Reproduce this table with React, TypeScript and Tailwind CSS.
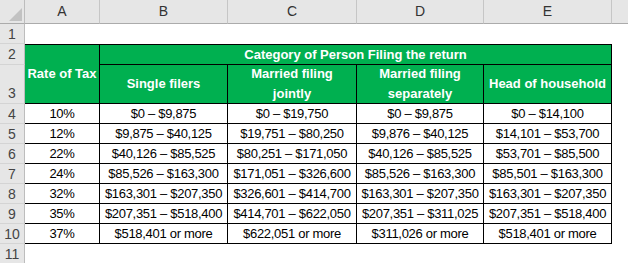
import React from 'react';

const font = { fontFamily: '"Liberation Sans", Arial, sans-serif' };

const columns = ['A', 'B', 'C', 'D', 'E'];

const rows: string[][] = [
  ['10%', '$0 – $9,875', '$0 – $19,750', '$0 – $9,875', '$0 – $14,100'],
  ['12%', '$9,875 – $40,125', '$19,751 – $80,250', '$9,876 – $40,125', '$14,101 – $53,700'],
  ['22%', '$40,126 – $85,525', '$80,251 – $171,050', '$40,126 – $85,525', '$53,701 – $85,500'],
  ['24%', '$85,526 – $163,300', '$171,051 – $326,600', '$85,526 – $163,300', '$85,501 – $163,300'],
  ['32%', '$163,301 – $207,350', '$326,601 – $414,700', '$163,301 – $207,350', '$163,301 – $207,350'],
  ['35%', '$207,351 – $518,400', '$414,701 – $622,050', '$207,351 – $311,025', '$207,351 – $518,400'],
  ['37%', '$518,401 or more', '$622,051 or more', '$311,026 or more', '$518,401 or more'],
];

const filers = [
  ['Single filers'],
  ['Married filing', 'jointly'],
  ['Married filing', 'separately'],
  ['Head of household'],
];

function RowNum({ n, align = 'center' }: { n: number; align?: 'center' | 'end' }) {
  return (
    <div
      className={`flex justify-center bg-[#e6e6e6] border-r border-b border-r-[#bdbdbd] border-b-[#d4d4d4] text-[14px] text-[#444] leading-[20px] ${
        align === 'end' ? 'items-end' : 'items-center'
      }`}
    >
      {n}
    </div>
  );
}

export default function App() {
  return (
    <div
      className="w-[628px] h-[263px] overflow-hidden bg-white grid text-black"
      style={{
        ...font,
        gridTemplateColumns: '25px 75px 128px 129px 127px 128px 1fr',
        gridTemplateRows: '24px 20px 21px 39px repeat(7, 20px) 1fr',
      }}
    >
      {/* column headers */}
      <div className="relative bg-[#e6e6e6] border-r border-b border-r-[#bdbdbd] border-b-[#ababab]">
        <svg className="absolute right-[2px] bottom-[2px]" width="13" height="13" viewBox="0 0 13 13">
          <polygon points="13,0 13,13 0,13" fill="#c2c2c2" />
        </svg>
      </div>
      {columns.map((c) => (
        <div
          key={c}
          className="flex items-center justify-center bg-[#e6e6e6] border-r border-b border-r-[#c6c6c6] border-b-[#ababab] text-[14px] text-[#333]"
        >
          {c}
        </div>
      ))}
      <div className="bg-[#e6e6e6] border-b border-b-[#ababab]" />

      {/* row 1 */}
      <RowNum n={1} />
      <div className="col-span-6" />

      {/* rows 2-3 header block */}
      <RowNum n={2} />
      <div className="row-span-2 flex items-center justify-center bg-[#00b050] border-t border-r border-b border-black text-white font-bold text-[13px]">
        Rate of Tax
      </div>
      <div className="col-span-4 flex items-center justify-center bg-[#00b050] border-t border-r border-b border-black text-white font-bold text-[13px]">
        Category of Person Filing the return
      </div>
      <div />

      <RowNum n={3} align="end" />
      {filers.map((lines, i) => (
        <div
          key={i}
          className="flex flex-col items-center justify-center bg-[#00b050] border-r border-b border-black text-white font-bold text-[13px] leading-[20px]"
        >
          {lines.map((l) => (
            <span key={l}>{l}</span>
          ))}
        </div>
      ))}
      <div />

      {/* data rows */}
      {rows.map((r, i) => (
        <React.Fragment key={i}>
          <RowNum n={i + 4} />
          {r.map((v, j) => (
            <div
              key={j}
              className="flex items-center justify-center border-r border-b border-black text-[13px] tracking-[-0.3px] whitespace-nowrap"
            >
              {v}
            </div>
          ))}
          <div />
        </React.Fragment>
      ))}

      {/* row 11 */}
      <RowNum n={11} />
      <div className="col-span-6" />
    </div>
  );
}
